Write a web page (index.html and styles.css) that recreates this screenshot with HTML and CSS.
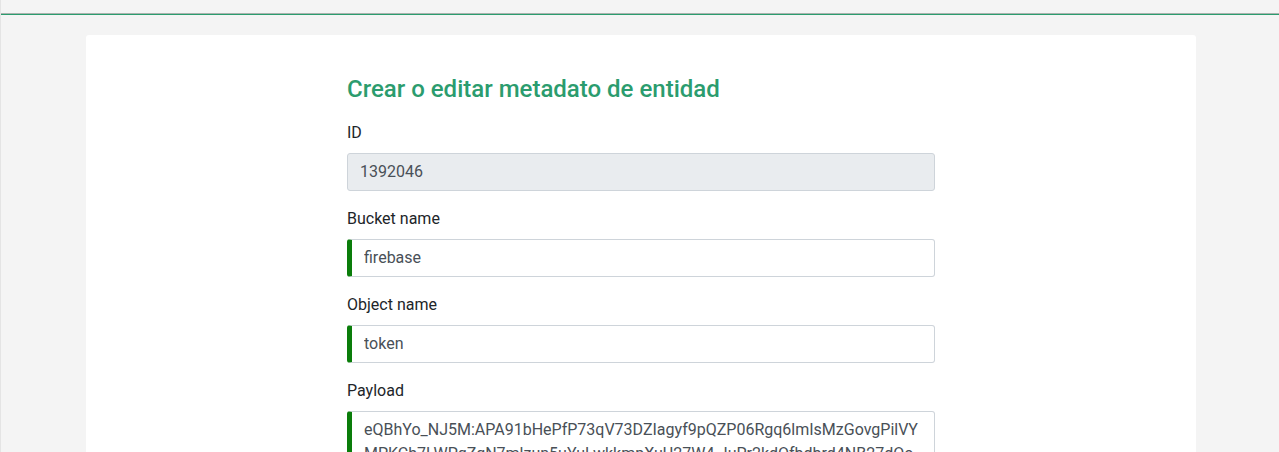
FILE: index.html
```html
<!DOCTYPE html>
<html lang="es">
<head>
<meta charset="utf-8">
<title>Crear o editar metadato de entidad</title>
<link rel="stylesheet" href="styles.css">
</head>
<body>
<div class="page">
  <header class="topbar"></header>
  <main class="wrap">
    <section class="card">
      <form class="form">
        <h1 class="title">Crear o editar metadato de entidad</h1>
        <div class="group">
          <label class="label" for="id">ID</label>
          <input class="field disabled" id="id" type="text" value="1392046" disabled>
        </div>
        <div class="group">
          <label class="label" for="bucket">Bucket name</label>
          <input class="field valid" id="bucket" type="text" value="firebase">
        </div>
        <div class="group">
          <label class="label" for="object">Object name</label>
          <input class="field valid" id="object" type="text" value="token">
        </div>
        <div class="group">
          <label class="label" for="payload">Payload</label>
          <textarea class="field valid area" id="payload" rows="4">eQBhYo_NJ5M:APA91bHePfP73qV73DZIagyf9pQZP06Rgq6lmIsMzGovgPilVYMPKCh7LWPgZgN7mlzun5uYuLwkkmpXuU27W4-JuPr2kdOfbdbrd4NB27dOoU8sKq2xTzY9vWbLp</textarea>
        </div>
      </form>
    </section>
  </main>
</div>
</body>
</html>
```

FILE: styles.css
```css
html, body {
  margin: 0;
  padding: 0;
}
body {
  background: #f4f4f4;
  font-family: Roboto, "Liberation Sans", sans-serif;
  color: #212529;
  height: 452px;
  overflow: hidden;
}
.page {
  border-left: 1px solid #e4e4e4;
  min-height: 452px;
  box-sizing: border-box;
}
.topbar {
  height: 13px;
  border-bottom: 1px solid #a9b3ae;
  box-shadow: 0 1px 0 #2b9c6e;
  margin-bottom: 21px;
  background: #f4f4f4;
}
.wrap {
  padding-left: 85px;
}
.card {
  width: 1110px;
  background: #fff;
  border-radius: 3px;
  min-height: 500px;
  display: flex;
  justify-content: center;
}
.form {
  width: 588px;
  padding-top: 40px;
}
.title {
  margin: 0 0 17px;
  font-size: 24px;
  line-height: 28.8px;
  font-weight: 500;
  color: #2b9c6e;
}
.group {
  margin-bottom: 16px;
}
.label {
  display: block;
  font-size: 16px;
  line-height: 24px;
  margin-bottom: 8px;
  color: #212529;
}
.field {
  display: block;
  width: 100%;
  box-sizing: border-box;
  height: 38px;
  padding: 6px 12px;
  font-family: Roboto, "Liberation Sans", sans-serif;
  font-size: 16px;
  line-height: 24px;
  color: #495057;
  background: #fff;
  border: 1px solid #ced4da;
  border-radius: 3px;
  outline: none;
}
.field.disabled {
  background: #e9ecef;
  color: #495057;
  -webkit-text-fill-color: #495057;
  opacity: 1;
}
.field.valid {
  border-left: 5px solid #0a7d0a;
}
.area {
  height: 110px;
  resize: none;
  overflow: hidden;
  word-break: break-all;
}
```
